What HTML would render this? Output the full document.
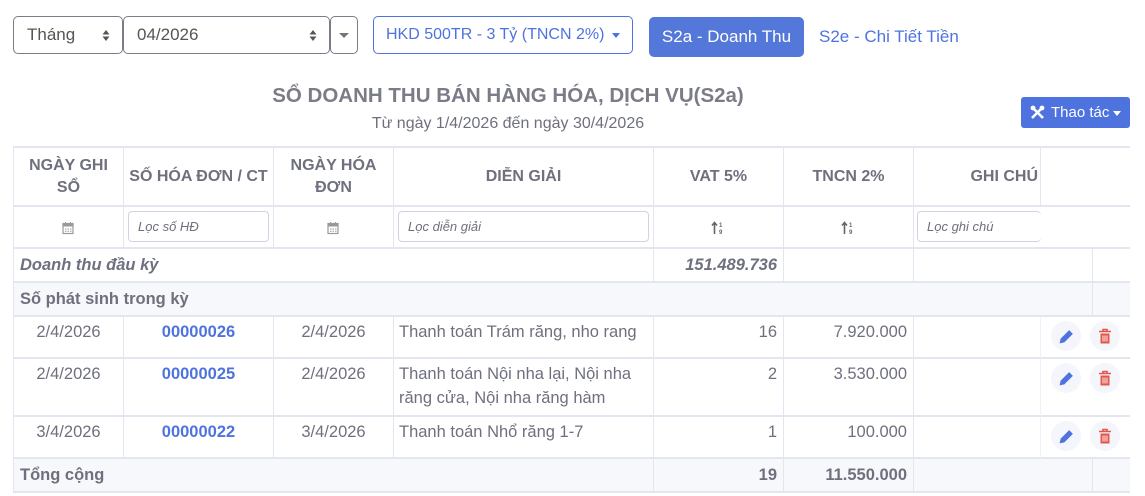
<!DOCTYPE html>
<html><head><meta charset="utf-8">
<style>
*{box-sizing:border-box;margin:0;padding:0}
body{width:1145px;height:496px;background:#fff;font-family:"Liberation Sans",sans-serif;color:#6e707e;position:relative;overflow:hidden}
.a{position:absolute}
.box{border:1px solid #7a7d88;border-radius:5px;font-size:17px;color:#555;padding-left:13px;line-height:36px;background:#fff;white-space:nowrap}
.c{position:absolute;border-right:1px solid #e3e6f0;border-bottom:2px solid #e3e6f0;font-size:16.5px;padding:0 6px}
.ctr{text-align:center}
.rt{text-align:right}
.hd{font-weight:bold;color:#6e707e;display:flex;align-items:center;justify-content:center;text-align:center;line-height:22px;font-size:16px;white-space:nowrap;padding:0 3px}
.in{position:absolute;border:1px solid #d1d3e2;border-radius:4px;font-size:13px;font-style:italic;color:#6e707e;padding-left:9px;line-height:29px;background:#fff}
.link{color:#4e73df;font-weight:bold}
.circ{position:absolute;width:30px;height:30px;border-radius:50%;background:#f5f6fb}
</style></head><body>

<div class="a box" style="left:13px;top:16px;width:110px;height:38px">Tháng<svg class="a" style="right:12px;top:12px" width="8" height="13" viewBox="0 0 8 13"><path d="M4 1L7.5 5.5H.5zM4 12L7.5 7.5H.5z" fill="#555"/></svg></div>
<div class="a box" style="left:123px;top:16px;width:207px;height:38px">04/2026<svg class="a" style="right:12px;top:12px" width="8" height="13" viewBox="0 0 8 13"><path d="M4 1L7.5 5.5H.5zM4 12L7.5 7.5H.5z" fill="#555"/></svg></div>
<div class="a box" style="left:330px;top:16px;width:28px;height:38px;padding:0"><span class="a" style="left:8px;top:16px;border-left:5px solid transparent;border-right:5px solid transparent;border-top:5px solid #777"></span></div>
<div class="a box" style="left:373px;top:16px;width:260px;height:38px;border-color:#4e73df;color:#4e73df;font-size:16px;padding-left:12px">HKD 500TR - 3 Tỷ (TNCN 2%)<span class="a" style="right:12px;top:16px;border-left:4px solid transparent;border-right:4px solid transparent;border-top:5px solid #4e73df"></span></div>
<div class="a" style="left:649px;top:17px;width:155px;height:40px;background:#5478d9;border-radius:5px;color:#fff;font-size:17px;line-height:40px;text-align:center">S2a - Doanh Thu</div>
<div class="a" style="left:819px;top:17px;font-size:17px;line-height:40px;color:#4e73df">S2e - Chi Tiết Tiền</div>

<div class="a" style="left:0;width:1016px;top:84px;text-align:center;font-size:20.5px;font-weight:bold;color:#7a7c88">SỔ DOANH THU BÁN HÀNG HÓA, DỊCH VỤ(S2a)</div>
<div class="a" style="left:0;width:1016px;top:115px;text-align:center;font-size:16px;color:#6e707e">Từ ngày 1/4/2026 đến ngày 30/4/2026</div>
<div class="a" style="left:1021px;top:97px;width:109px;height:31px;background:#4e73df;border-radius:3px;color:#fff;font-size:15px;line-height:31px;padding-left:30px">Thao tác<svg class="a" style="left:9px;top:8px" width="15" height="15" viewBox="0 0 15 15"><path d="M2 2l11 11M13 2L2 13" stroke="#fff" stroke-width="2.6"/><circle cx="3" cy="3" r="2.4" fill="#fff"/><circle cx="12" cy="3" r="2.4" fill="#fff"/></svg><span class="a" style="right:9px;top:14px;border-left:4px solid transparent;border-right:4px solid transparent;border-top:5px solid #fff"></span></div>

<div class="a" style="left:13px;top:146px;width:1117px;height:2px;background:#e3e6f0"></div>
<div class="a" style="left:13px;top:146px;width:1px;height:347px;background:#e3e6f0"></div>

<div class="c hd" style="left:14px;top:148px;width:110px;height:59px">NGÀY GHI<br>SỔ</div>
<div class="c hd" style="left:124px;top:148px;width:150px;height:59px">SỐ HÓA ĐƠN / CT</div>
<div class="c hd" style="left:274px;top:148px;width:120px;height:59px">NGÀY HÓA<br>ĐƠN</div>
<div class="c hd" style="left:394px;top:148px;width:260px;height:59px">DIỄN GIẢI</div>
<div class="c hd" style="left:654px;top:148px;width:130px;height:59px">VAT 5%</div>
<div class="c hd" style="left:784px;top:148px;width:130px;height:59px">TNCN 2%</div>
<div class="c hd" style="left:914px;top:148px;width:127px;height:59px;justify-content:flex-end;padding-right:2px">GHI CHÚ</div>
<div class="c" style="left:1041px;top:148px;width:89px;height:59px;border-right:none"></div>

<div class="c" style="left:14px;top:207px;width:110px;height:42px"></div>
<div class="c" style="left:124px;top:207px;width:150px;height:42px"></div>
<div class="c" style="left:274px;top:207px;width:120px;height:42px"></div>
<div class="c" style="left:394px;top:207px;width:260px;height:42px"></div>
<div class="c" style="left:654px;top:207px;width:130px;height:42px"></div>
<div class="c" style="left:784px;top:207px;width:130px;height:42px"></div>
<div class="c" style="left:914px;top:207px;width:127px;height:42px;border-right:none"></div>
<div class="c" style="left:1041px;top:207px;width:89px;height:42px;border-right:none"></div>
<svg class="a" style="left:62px;top:221px" width="12" height="14" viewBox="0 0 12 14"><rect x="1" y="2.5" width="10" height="10" fill="none" stroke="#999" stroke-width="1.2"/><rect x="1" y="2.5" width="10" height="3" fill="#999"/><path d="M3.5 1v3M8.5 1v3" stroke="#999"/><path d="M3 8h1.5M5.5 8h1.5M8 8h1.5M3 10.3h1.5M5.5 10.3h1.5M8 10.3h1.5" stroke="#999"/></svg>
<svg class="a" style="left:327px;top:221px" width="12" height="14" viewBox="0 0 12 14"><rect x="1" y="2.5" width="10" height="10" fill="none" stroke="#999" stroke-width="1.2"/><rect x="1" y="2.5" width="10" height="3" fill="#999"/><path d="M3.5 1v3M8.5 1v3" stroke="#999"/><path d="M3 8h1.5M5.5 8h1.5M8 8h1.5M3 10.3h1.5M5.5 10.3h1.5M8 10.3h1.5" stroke="#999"/></svg>
<div class="in" style="left:128px;top:211px;width:141px;height:31px">Lọc số HĐ</div>
<div class="in" style="left:398px;top:211px;width:251px;height:31px">Lọc diễn giải</div>
<div class="in" style="left:917px;top:211px;width:124px;height:31px;border-right:none">Lọc ghi chú</div>
<svg class="a" style="left:711px;top:221px" width="13" height="14" viewBox="0 0 13 14"><path d="M3.5 13V2M1 4.5L3.5 1.5 6 4.5" stroke="#666" stroke-width="1.6" fill="none"/><text x="8" y="6" font-size="6" fill="#666" font-family="Liberation Sans" font-weight="bold">1</text><text x="8" y="13" font-size="6" fill="#666" font-family="Liberation Sans" font-weight="bold">9</text></svg>
<svg class="a" style="left:841px;top:221px" width="13" height="14" viewBox="0 0 13 14"><path d="M3.5 13V2M1 4.5L3.5 1.5 6 4.5" stroke="#666" stroke-width="1.6" fill="none"/><text x="8" y="6" font-size="6" fill="#666" font-family="Liberation Sans" font-weight="bold">1</text><text x="8" y="13" font-size="6" fill="#666" font-family="Liberation Sans" font-weight="bold">9</text></svg>

<div class="c" style="left:14px;top:249px;width:640px;height:34px;line-height:32px;font-style:italic;font-weight:bold">Doanh thu đầu kỳ</div>
<div class="c rt" style="left:654px;top:249px;width:130px;height:34px;line-height:32px;font-style:italic;font-weight:bold">151.489.736</div>
<div class="c" style="left:784px;top:249px;width:130px;height:34px"></div>
<div class="c" style="left:914px;top:249px;width:179px;height:34px"></div>
<div class="c" style="left:1093px;top:249px;width:37px;height:34px;border-right:none"></div>

<div class="c" style="left:14px;top:283px;width:1079px;height:34px;line-height:32px;font-weight:bold;background:#f7f8fc">Số phát sinh trong kỳ</div>
<div class="c" style="left:1093px;top:283px;width:37px;height:34px;border-right:none;background:#f7f8fc"></div>

<div class="c ctr" style="left:14px;top:317px;width:110px;height:42px;padding-top:6px">2/4/2026</div>
<div class="c ctr link" style="left:124px;top:317px;width:150px;height:42px;padding-top:6px">00000026</div>
<div class="c ctr" style="left:274px;top:317px;width:120px;height:42px;padding-top:6px">2/4/2026</div>
<div class="c" style="left:394px;top:317px;width:260px;height:42px;padding-top:6px;padding-left:5px">Thanh toán Trám răng, nho rang</div>
<div class="c rt" style="left:654px;top:317px;width:130px;height:42px;padding-top:6px">16</div>
<div class="c rt" style="left:784px;top:317px;width:130px;height:42px;padding-top:6px">7.920.000</div>
<div class="c" style="left:914px;top:317px;width:127px;height:42px;border-right-color:#f0f1f5"></div>
<div class="c" style="left:1041px;top:317px;width:89px;height:42px;border-right:none"></div>

<div class="c ctr" style="left:14px;top:359px;width:110px;height:58px;padding-top:6px">2/4/2026</div>
<div class="c ctr link" style="left:124px;top:359px;width:150px;height:58px;padding-top:6px">00000025</div>
<div class="c ctr" style="left:274px;top:359px;width:120px;height:58px;padding-top:6px">2/4/2026</div>
<div class="c" style="left:394px;top:359px;width:260px;height:58px;padding-top:3px;padding-left:5px;line-height:24px">Thanh toán Nội nha lại, Nội nha răng cửa, Nội nha răng hàm</div>
<div class="c rt" style="left:654px;top:359px;width:130px;height:58px;padding-top:6px">2</div>
<div class="c rt" style="left:784px;top:359px;width:130px;height:58px;padding-top:6px">3.530.000</div>
<div class="c" style="left:914px;top:359px;width:127px;height:58px;border-right-color:#f0f1f5"></div>
<div class="c" style="left:1041px;top:359px;width:89px;height:58px;border-right:none"></div>

<div class="c ctr" style="left:14px;top:417px;width:110px;height:42px;padding-top:6px">3/4/2026</div>
<div class="c ctr link" style="left:124px;top:417px;width:150px;height:42px;padding-top:6px">00000022</div>
<div class="c ctr" style="left:274px;top:417px;width:120px;height:42px;padding-top:6px">3/4/2026</div>
<div class="c" style="left:394px;top:417px;width:260px;height:42px;padding-top:6px;padding-left:5px">Thanh toán Nhổ răng 1-7</div>
<div class="c rt" style="left:654px;top:417px;width:130px;height:42px;padding-top:6px">1</div>
<div class="c rt" style="left:784px;top:417px;width:130px;height:42px;padding-top:6px">100.000</div>
<div class="c" style="left:914px;top:417px;width:127px;height:42px;border-right-color:#f0f1f5"></div>
<div class="c" style="left:1041px;top:417px;width:89px;height:42px;border-right:none"></div>

<div class="circ" style="left:1051px;top:321px"></div><div class="circ" style="left:1090px;top:321px"></div>
<div class="circ" style="left:1051px;top:363px"></div><div class="circ" style="left:1090px;top:363px"></div>
<div class="circ" style="left:1051px;top:421px"></div><div class="circ" style="left:1090px;top:421px"></div>
<svg class="a" style="left:1058px;top:328px" width="17" height="17" viewBox="0 0 16 16"><path d="M1.5 14.5l1-4.5 8-8 3.5 3.5-8 8z" fill="#4e73df"/></svg>
<svg class="a" style="left:1058px;top:370px" width="17" height="17" viewBox="0 0 16 16"><path d="M1.5 14.5l1-4.5 8-8 3.5 3.5-8 8z" fill="#4e73df"/></svg>
<svg class="a" style="left:1058px;top:428px" width="17" height="17" viewBox="0 0 16 16"><path d="M1.5 14.5l1-4.5 8-8 3.5 3.5-8 8z" fill="#4e73df"/></svg>
<svg class="a" style="left:1098px;top:328px" width="14" height="17" viewBox="0 0 14 16"><path d="M1 3h12M5 3V1h4v2" stroke="#e2574c" stroke-width="1.6" fill="none"/><path d="M2.5 5h9v10h-9z" fill="#e2574c"/><path d="M5 7v6M7 7v6M9 7v6" stroke="#fff" stroke-width="0.9"/></svg>
<svg class="a" style="left:1098px;top:370px" width="14" height="17" viewBox="0 0 14 16"><path d="M1 3h12M5 3V1h4v2" stroke="#e2574c" stroke-width="1.6" fill="none"/><path d="M2.5 5h9v10h-9z" fill="#e2574c"/><path d="M5 7v6M7 7v6M9 7v6" stroke="#fff" stroke-width="0.9"/></svg>
<svg class="a" style="left:1098px;top:428px" width="14" height="17" viewBox="0 0 14 16"><path d="M1 3h12M5 3V1h4v2" stroke="#e2574c" stroke-width="1.6" fill="none"/><path d="M2.5 5h9v10h-9z" fill="#e2574c"/><path d="M5 7v6M7 7v6M9 7v6" stroke="#fff" stroke-width="0.9"/></svg>

<div class="c" style="left:14px;top:459px;width:640px;height:34px;line-height:32px;font-weight:bold;background:#f7f8fc">Tổng cộng</div>
<div class="c rt" style="left:654px;top:459px;width:130px;height:34px;line-height:32px;font-weight:bold;background:#f7f8fc">19</div>
<div class="c rt" style="left:784px;top:459px;width:130px;height:34px;line-height:32px;font-weight:bold;background:#f7f8fc">11.550.000</div>
<div class="c" style="left:914px;top:459px;width:179px;height:34px;background:#f7f8fc"></div>
<div class="c" style="left:1093px;top:459px;width:37px;height:34px;border-right:none;background:#f7f8fc"></div>
</body></html>
